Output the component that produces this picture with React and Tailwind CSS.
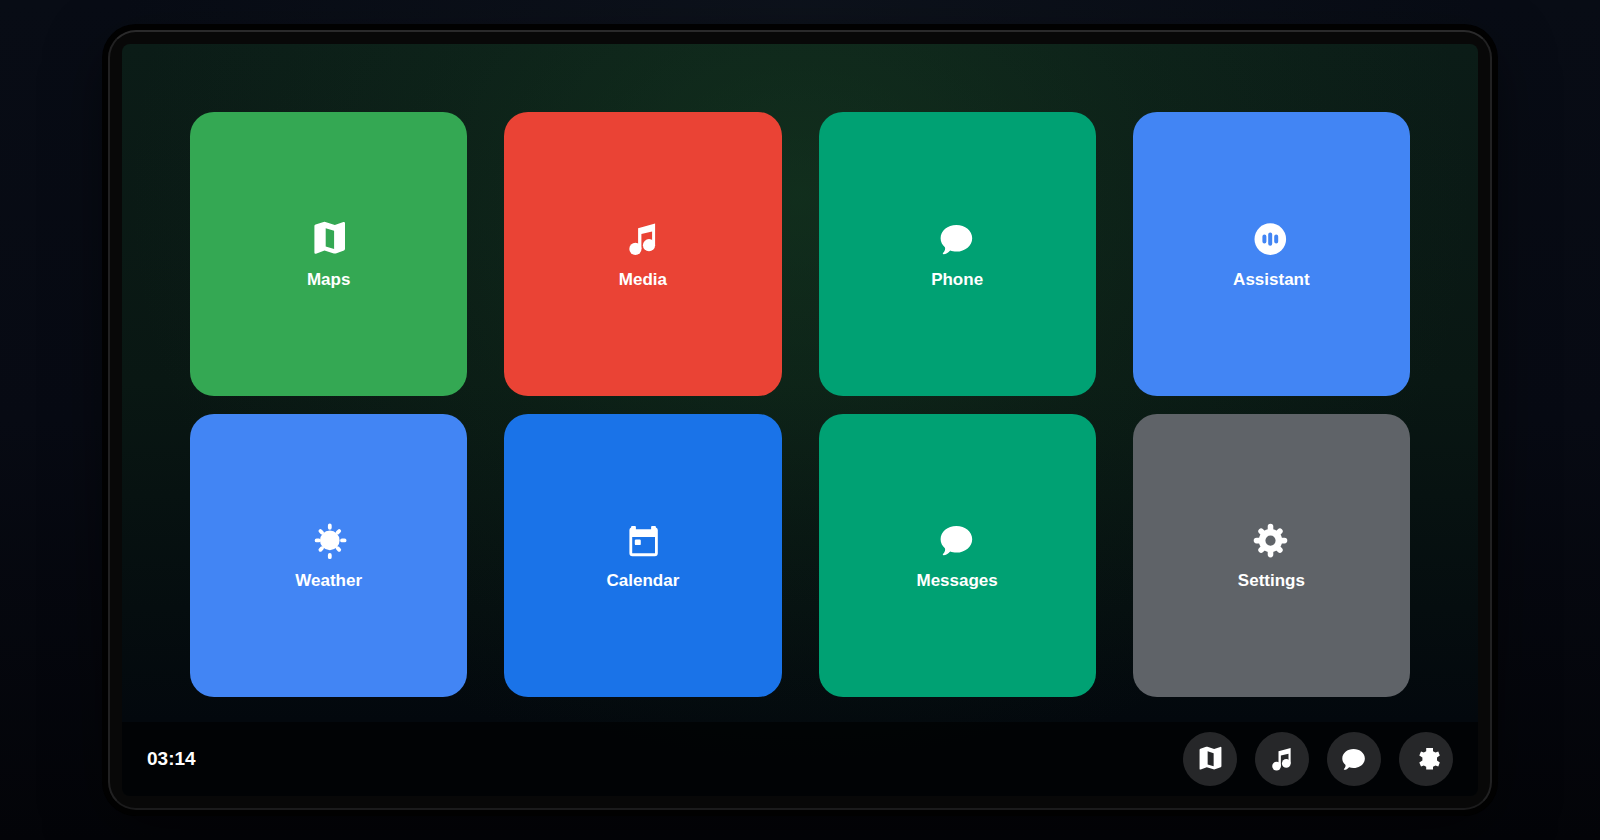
const MapIcon = (props) => (
  <svg viewBox="0 0 42 42" fill="currentColor" aria-hidden="true" {...props}>
    <path
      fillRule="evenodd"
      d="M7.6 6.5 15.6 4Q16.5 3.7 17.4 4L26.8 7.1 35.4 4.1Q37 3.7 37 5.3V30.8Q37 32 36 32.4L27.8 35.4Q26.8 35.8 25.8 35.4L16.5 32.4 8 35.7Q6.4 36.2 6.4 34.6V8Q6.4 6.9 7.6 6.5ZM17.7 10.3V28.6L26.1 31V12.8Z"
    />
  </svg>
);

const MusicIcon = (props) => (
  <svg viewBox="0 0 42 42" fill="currentColor" aria-hidden="true" {...props}>
    <path d="M16.1 10.2 33.1 5.5V27.2H30.1V13.6L19.4 16V31H16.1Z" />
    <circle cx="13.4" cy="30.9" r="6.1" />
    <circle cx="27" cy="27.2" r="6.1" />
  </svg>
);

const ChatIcon = (props) => (
  <svg viewBox="0 0 42 42" fill="currentColor" aria-hidden="true" {...props}>
    <path d="M20.4 6.9C29.2 6.9 36.2 12.8 36.2 20.2S29.2 33.6 20.4 33.6C18.2 33.6 16 33.2 14.2 32.5 12.2 34.8 9.8 36.2 7.6 36.2 6.6 36.2 6.6 35.3 7.2 34.7 8.8 33 9.6 31 8.9 29.2 6.2 26.8 4.6 23.7 4.6 20.2 4.6 12.8 11.6 6.9 20.4 6.9Z" />
  </svg>
);

const AssistantIcon = (props) => (
  <svg viewBox="0 0 42 42" fill="none" aria-hidden="true" {...props}>
    <circle cx="20.3" cy="21.1" r="15.8" fill="currentColor" />
    <path d="M14.4 18.6V23.6M20.2 16.4V25.8M26.2 18.6V23.6" stroke="#4285f4" strokeWidth="4" strokeLinecap="round" />
  </svg>
);

const WeatherIcon = (props) => (
  <svg viewBox="0 0 42 42" fill="currentColor" aria-hidden="true" {...props}>
    <circle cx="21.8" cy="21.4" r="9.8" />
    <path
      d="M21.8 6.4V8.8M21.8 36V38.2M8.6 21.4H10.8M34 21.4H36.6M12.4 12 14 13.6M31.2 12 29.6 13.6M12.4 30.8 14 29.2M31.2 30.8 29.6 29.2"
      stroke="currentColor"
      strokeWidth="3.8"
      strokeLinecap="round"
    />
  </svg>
);

const CalendarIcon = (props) => (
  <svg viewBox="0 0 42 42" fill="currentColor" aria-hidden="true" {...props}>
    <path
      fillRule="evenodd"
      d="M9.1 8.6V7.9Q9.1 7 10 7H13Q13.9 7 13.9 7.9V10.3H29.1V7.9Q29.1 7 30 7H33Q33.9 7 33.9 7.9V8.6Q35.8 9.1 35.8 11.1V34.3Q35.8 37.3 32.8 37.3H10.4Q7.4 37.3 7.4 34.3V11.1Q7.4 9.1 9.1 8.6ZM10.2 18V34.2H33V18Z"
    />
    <rect x="12.8" y="20.5" width="6" height="5.6" rx="1.2" />
  </svg>
);

const GearIcon = (props) => (
  <svg viewBox="0 0 42 42" fill="none" stroke="currentColor" aria-hidden="true" {...props}>
    <circle cx="20.5" cy="21.6" r="8.4" strokeWidth="6.6" />
    <path
      d="M20.5 10.6V7.6M20.5 32.6V35.6M9.5 21.6H6.5M31.5 21.6H34.5M12.7 13.8 11.1 12.2M28.3 13.8 29.9 12.2M12.7 29.4 11.1 31M28.3 29.4 29.9 31"
      strokeWidth="5.6"
      strokeLinecap="round"
    />
  </svg>
);

// Solid gear used in the dock
const DockGearIcon = (props) => (
  <svg viewBox="0 0 30 30" fill="currentColor" aria-hidden="true" {...props}>
    <path d="M15.2 4H22V7.2L24.5 8.6 27.3 7.5 28.8 11.5 26 13.5V16.5L28.8 18.6 27.3 22.4 24.5 21.4 22 22.7V25.4H15.2V22.7L12.8 21.4 10 22.4 8.3 18.6 11.4 16.5V13.5L8.3 11.5 10 7.5 12.8 8.6 15.2 7.2Z" />
  </svg>
);

const apps = [
  { name: 'Maps', icon: MapIcon, color: 'bg-[#34a853]' },
  { name: 'Media', icon: MusicIcon, color: 'bg-[#ea4335]' },
  { name: 'Phone', icon: ChatIcon, color: 'bg-[#00a173]' },
  { name: 'Assistant', icon: AssistantIcon, color: 'bg-[#4285f4]' },
  { name: 'Weather', icon: WeatherIcon, color: 'bg-[#4285f4]' },
  { name: 'Calendar', icon: CalendarIcon, color: 'bg-[#1a73e8]' },
  { name: 'Messages', icon: ChatIcon, color: 'bg-[#00a173]' },
  { name: 'Settings', icon: GearIcon, color: 'bg-[#5f6368]' },
];

const dock = [
  { name: 'Open maps', icon: MapIcon },
  { name: 'Open media', icon: MusicIcon },
  { name: 'Open messages', icon: ChatIcon },
  { name: 'Open settings', icon: DockGearIcon },
];

function AppTile({ name, icon: Icon, color }) {
  return (
    <button
      type="button"
      className={`flex flex-col items-center justify-center gap-2.5 rounded-3xl text-white ${color}`}
    >
      <Icon className="size-[42px]" />
      <span className="text-[17px] leading-5 font-bold">{name}</span>
    </button>
  );
}

function DockBar() {
  return (
    <footer className="flex h-[74px] items-center justify-between bg-black/60 px-[25px]">
      <time className="text-[19px] leading-6 font-bold text-white">03:14</time>
      <nav className="flex gap-[18px]">
        {dock.map(({ name, icon: Icon }) => (
          <button
            key={name}
            type="button"
            aria-label={name}
            className="flex size-[54px] items-center justify-center rounded-full bg-[#262729] text-white"
          >
            <Icon className="size-[30px]" />
          </button>
        ))}
      </nav>
    </footer>
  );
}

export default function App() {
  return (
    <div className="flex min-h-screen justify-center bg-[radial-gradient(ellipse_at_50%_0%,rgba(24,32,42,0.3)_0%,transparent_60%),linear-gradient(#080c15_0%,#070a13_50%,#030408_100%)] py-[30px] font-['Liberation_Sans',Arial,sans-serif]">
      <div className="flex w-[86.5%] rounded-[28px] border-2 border-[#212122] border-t-[#2a2a2b] border-b-[#1b1b1c] bg-[#080808] p-3 shadow-[0_0_0_6px_#010101,0_20px_60px_rgba(0,0,0,0.5)]">
        <div className="flex flex-1 flex-col overflow-hidden rounded-lg bg-[radial-gradient(ellipse_at_50%_20%,rgba(28,76,40,0.4)_0%,rgba(28,76,40,0.14)_38%,transparent_70%),linear-gradient(#0b1c17_0%,#091713_45%,#03080d_90%)]">
          <main className="grid flex-1 grid-cols-4 grid-rows-2 gap-x-[37px] gap-y-[18px] px-[68px] pt-[68px] pb-[25px]">
            {apps.map((app) => (
              <AppTile key={app.name} {...app} />
            ))}
          </main>
          <DockBar />
        </div>
      </div>
    </div>
  );
}
